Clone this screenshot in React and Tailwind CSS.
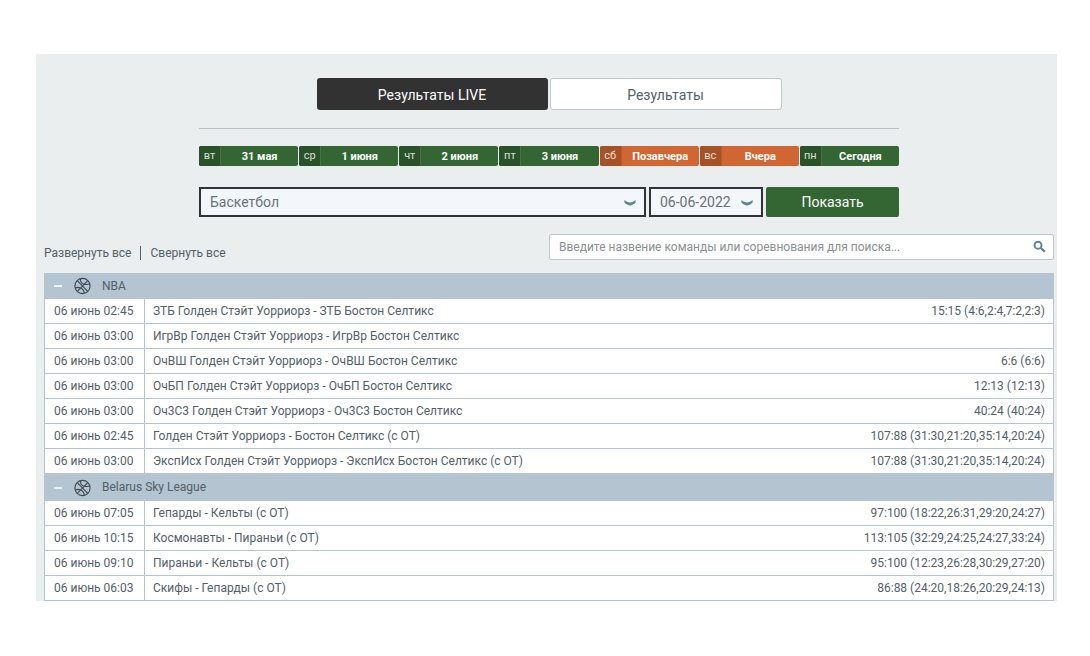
import React from "react";

const days = [
  { dow: "вт", label: "31 мая" },
  { dow: "ср", label: "1 июня" },
  { dow: "чт", label: "2 июня" },
  { dow: "пт", label: "3 июня" },
  { dow: "сб", label: "Позавчера", recent: true },
  { dow: "вс", label: "Вчера", recent: true },
  { dow: "пн", label: "Сегодня" },
];

const leagues = [
  {
    name: "NBA",
    games: [
      ["06 июнь 02:45", "ЗТБ Голден Стэйт Уорриорз - ЗТБ Бостон Селтикс", "15:15 (4:6,2:4,7:2,2:3)"],
      ["06 июнь 03:00", "ИгрВр Голден Стэйт Уорриорз - ИгрВр Бостон Селтикс", ""],
      ["06 июнь 03:00", "ОчВШ Голден Стэйт Уорриорз - ОчВШ Бостон Селтикс", "6:6 (6:6)"],
      ["06 июнь 03:00", "ОчБП Голден Стэйт Уорриорз - ОчБП Бостон Селтикс", "12:13 (12:13)"],
      ["06 июнь 03:00", "Оч3С3 Голден Стэйт Уорриорз - Оч3С3 Бостон Селтикс", "40:24 (40:24)"],
      ["06 июнь 02:45", "Голден Стэйт Уорриорз - Бостон Селтикс (с ОТ)", "107:88 (31:30,21:20,35:14,20:24)"],
      ["06 июнь 03:00", "ЭкспИсх Голден Стэйт Уорриорз - ЭкспИсх Бостон Селтикс (с ОТ)", "107:88 (31:30,21:20,35:14,20:24)"],
    ],
  },
  {
    name: "Belarus Sky League",
    games: [
      ["06 июнь 07:05", "Гепарды - Кельты (с ОТ)", "97:100 (18:22,26:31,29:20,24:27)"],
      ["06 июнь 10:15", "Космонавты - Пираньи (с ОТ)", "113:105 (32:29,24:25,24:27,33:24)"],
      ["06 июнь 09:10", "Пираньи - Кельты (с ОТ)", "95:100 (12:23,26:28,30:29,27:20)"],
      ["06 июнь 06:03", "Скифы - Гепарды (с ОТ)", "86:88 (24:20,18:26,20:29,24:13)"],
    ],
  },
];

function Chevron() {
  return (
    <svg className="pointer-events-none absolute top-3 right-[10px] h-2 w-3" viewBox="0 0 12 8" aria-hidden="true">
      <path d="M0.4 1 C2.2 2.2 3.8 3.5 6 3.5 C8.2 3.5 9.8 2.2 11.6 1 V3.6 C9.8 5.2 8 6.5 6 6.5 C4 6.5 2.2 5.2 0.4 3.6 Z" fill="#5f858d" />
    </svg>
  );
}

function Ball() {
  return (
    <svg className="h-[18px] w-[18px]" viewBox="0 0 18 18" fill="none" stroke="#3f4a51" strokeWidth="1.1" aria-hidden="true">
      <circle cx="8.5" cy="9" r="7.6" />
      <path d="M3.2 3.6 L13.8 14.4 M13.8 3.6 L3.2 14.4" />
      <path d="M6.6 1.6 C6.2 4.6 7.8 6.8 10.6 7.4 C12.8 7.8 14.6 7.4 15.9 6.8" />
      <path d="M1.1 11.2 C2.8 10.2 4.8 10.2 6.6 11 C9 12 10.2 13.8 10.3 16.4" />
    </svg>
  );
}

function Select({ label, value, className }) {
  return (
    <div className={"relative " + className}>
      <select
        aria-label={label}
        defaultValue={value}
        className="block h-[30px] w-full appearance-none border-2 border-[#323337] bg-[#f3f7fb] pr-6 pl-[9px] text-sm text-[#6a7277] outline-none"
      >
        <option>{value}</option>
      </select>
      <Chevron />
    </div>
  );
}

export default function App() {
  return (
    <div className="bg-white pt-[54px] pr-[33px] pb-[55px] pl-9 font-[Roboto,sans-serif] text-[#53606a]">
      <main className="bg-[#eaeeef] pt-6 pr-[3px] pl-2">
        <nav className="flex justify-center gap-[2px]">
          <button className="h-8 w-[231px] rounded-[3px] bg-[#323232] pt-px text-sm text-white">Результаты LIVE</button>
          <button className="h-8 w-[232px] rounded-[3px] border border-[#c0c7cc] bg-white pt-px text-sm">Результаты</button>
        </nav>

        <section className="mx-auto mt-[18px] max-w-[700px] border-t border-[#b9c1c5] pt-[17px]">
          <div className="grid grid-cols-7 gap-px">
            {days.map((d) => (
              <button
                key={d.dow}
                className={
                  "flex h-5 items-stretch overflow-hidden rounded-[2px] text-[11px] leading-5 text-white " +
                  (d.recent ? "bg-[#cf6633]" : "bg-[#336633]")
                }
              >
                <span
                  className={
                    "w-[22px] border-r text-center " +
                    (d.recent ? "border-[#b95a30] bg-[#a65229] text-[#f3dccf]" : "border-[#457245] bg-[#295229] text-[#d5e0d5]")
                  }
                >
                  {d.dow}
                </span>
                <span className="grow pt-px text-center font-bold">{d.label}</span>
              </button>
            ))}
          </div>

          <form className="mt-[21px] flex gap-[3px]" onSubmit={(e) => e.preventDefault()}>
            <Select label="Вид спорта" value="Баскетбол" className="grow" />
            <Select label="Дата" value="06-06-2022" className="w-[114px]" />
            <button className="h-[30px] w-[133px] rounded-[2px] bg-[#336633] text-sm text-white">Показать</button>
          </form>
        </section>

        <div className="mt-[17px] flex">
          <div className="flex w-1/2 items-center pt-3 text-xs leading-[14px]">
            <button className="border-r border-[#53606a] pr-[9px]">Развернуть все</button>
            <button className="pl-[9px]">Свернуть все</button>
          </div>
          <div className="relative w-1/2">
            <input
              type="search"
              aria-label="Поиск"
              placeholder="Введите назвение команды или соревнования для поиска..."
              className="block h-[26px] w-full rounded-[2px] border border-[#c0c7cc] bg-white pr-8 pl-[9px] text-xs outline-none placeholder:text-[#8b8f92]"
            />
            <svg className="pointer-events-none absolute top-[6px] right-2 h-[13px] w-[13px]" viewBox="0 0 13 13" fill="none" stroke="#5f8291" aria-hidden="true">
              <circle cx="5" cy="5.2" r="3.5" strokeWidth="1.9" />
              <path d="M7.8 8 L11.8 11.6" strokeWidth="2.2" />
            </svg>
          </div>
        </div>

        <table className="mt-[13px] w-full border-separate border-spacing-0 border-x border-[#b4c4d1] bg-white text-xs leading-[23px]">
          {leagues.map((league) => (
            <tbody key={league.name} className="group">
              <tr className="bg-[#b4c4d1]">
                <th colSpan={3} scope="rowgroup" className="h-[26px] p-0 text-left font-normal group-last:h-[27px]">
                  <div className="flex items-center">
                    <button aria-label="Свернуть" className="flex h-5 w-[29px] items-center pl-[9px]">
                      <span className="h-[2px] w-2 bg-[#edf3f6]" />
                    </button>
                    <Ball />
                    <span className="pl-[10px]">{league.name}</span>
                  </div>
                </th>
              </tr>
              {league.games.map(([time, teams, score], i) => (
                <tr key={i}>
                  <td className="w-[100px] border-r border-b border-[#b4c4d1] p-0 pt-px pl-[9px] whitespace-nowrap">{time}</td>
                  <td className="border-b border-[#b4c4d1] p-0 pt-px pl-2">{teams}</td>
                  <td className="border-b border-[#b4c4d1] p-0 pt-px pr-2 text-right whitespace-nowrap">{score}</td>
                </tr>
              ))}
            </tbody>
          ))}
        </table>
      </main>
    </div>
  );
}
